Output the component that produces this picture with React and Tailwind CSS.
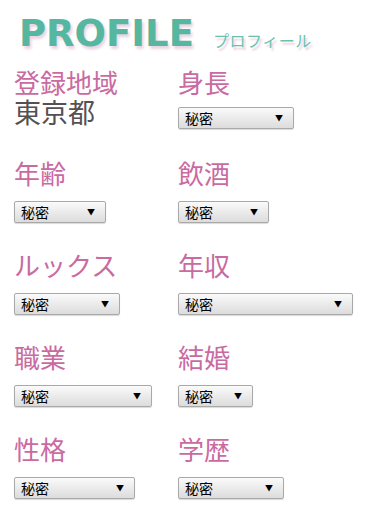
const jp = "font-['Noto_Sans_CJK_JP','Noto_Sans',sans-serif]";

const Select = ({ w }) => (
  <div
    className={`relative h-[22px] rounded-[2px] border border-[#a9a9a9] bg-gradient-to-b from-[#fafafa] to-[#dcdcdc] shadow-[0_1px_1px_rgba(0,0,0,0.15)] ${jp}`}
    style={{ width: w }}
  >
    <span className="absolute left-[6px] top-0 text-[14px] leading-[20px] text-black">秘密</span>
    <span className="absolute right-[10px] top-0 text-[8px] leading-[20px] text-black">▼</span>
  </div>
);

const Label = ({ children }) => (
  <div className={`text-[26px] leading-[26px] text-[#c96aa1] ${jp}`}>{children}</div>
);

const rows = [
  [["年齢", 92], ["飲酒", 91]],
  [["ルックス", 106], ["年収", 175]],
  [["職業", 138], ["結婚", 75]],
  [["性格", 121], ["学歴", 106]],
];

export default function App() {
  return (
    <div className="min-h-screen w-[378px] bg-white pl-[14px]">
      <div className="flex items-end pt-[14px] pl-[5px]">
        <span className="font-['DejaVu_Sans',sans-serif] text-[37px] font-bold leading-[40px] text-[#56b7a1] [text-shadow:2px_3px_3px_#ead3e2]">
          PROFILE
        </span>
        <span className={`ml-[19px] mb-[5px] text-[16px] leading-[18px] tracking-[0.5px] text-[#6cc1ad] [text-shadow:2px_3px_2px_#e6cbdc] ${jp}`}>
          プロフィール
        </span>
      </div>

      <div className="mt-[15px] grid grid-cols-[164px_1fr]">
        <div className="flex flex-col">
          <Label>登録地域</Label>
          <div className={`mt-[3px] text-[27px] leading-[28px] text-[#555052] ${jp}`}>東京都</div>
        </div>
        <div className="flex flex-col">
          <Label>身長</Label>
          <div className="mt-[12px]">
            <Select w={116} />
          </div>
        </div>
      </div>

      {rows.map((row, i) => (
        <div key={i} className={`grid grid-cols-[164px_1fr] ${i === 0 ? "mt-[31px]" : "mt-[29px]"}`}>
          {row.map(([label, w]) => (
            <div key={label} className="flex flex-col">
              <Label>{label}</Label>
              <div className="mt-[15px]">
                <Select w={w} />
              </div>
            </div>
          ))}
        </div>
      ))}
    </div>
  );
}
